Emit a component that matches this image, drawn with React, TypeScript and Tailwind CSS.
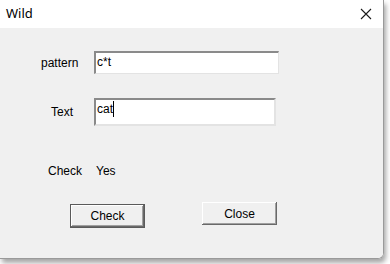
import { useState } from "react";

export default function App() {
  const [pattern, setPattern] = useState("c*t");
  const [text, setText] = useState("cat");

  return (
    <div className="w-[390px] h-[264px] bg-white font-['Liberation_Sans',Arial,sans-serif] text-[12px] text-black">
      <div className="w-[384px] h-[259px] flex flex-col rounded-br-[6px] overflow-hidden border-r border-b border-[#9a9a9a] shadow-[2px_4px_5px_rgba(0,0,0,0.35)]">
        {/* title bar */}
        <div className="h-[28px] bg-white flex items-center justify-between pl-[6px] pr-[10px]">
          <span className="text-[13px] font-['Noto_Sans',sans-serif]">Wild</span>
          <svg width="12" height="12" viewBox="0 0 12 12" className="mr-[1px]">
            <path d="M1 1 L11 11 M11 1 L1 11" stroke="#1a1a1a" strokeWidth="1.1" />
          </svg>
        </div>

        {/* body */}
        <div className="flex-1 bg-[#f0f0f0] flex flex-col">
          <div className="flex items-center mt-[23px]">
            <span className="ml-[41px] w-[53px]">pattern</span>
            <div className="w-[185px] h-[23px] bg-white border-t-2 border-l-2 border-[#8a8a8a] border-r border-b border-r-[#e3e3e3] border-b-[#e3e3e3] pl-[1px] leading-[18px]">
              {pattern}
            </div>
          </div>

          <div className="flex items-center mt-[24px]">
            <span className="ml-[51px] w-[43px]">Text</span>
            <div className="w-[182px] h-[28px] bg-white border-t-2 border-l-2 border-[#8a8a8a] border-r-2 border-b-2 border-r-[#e3e3e3] border-b-[#e3e3e3] pl-[1px] pt-[1px] leading-[16px] flex items-start">
              <span>{text}</span>
              <span className="w-px h-[16px] bg-black" />
            </div>
          </div>

          <div className="flex items-center mt-[36px]">
            <span className="ml-[48px] w-[48px]">Check</span>
            <span>Yes</span>
          </div>

          <div className="flex items-start mt-[22px]">
            <button
              onClick={() => setText(text)}
              className="ml-[70px] mt-[2px] w-[75px] h-[24px] bg-[#f0f0f0] border border-[#5a5a5a] shadow-[inset_-1px_-1px_0_#696969,inset_1px_1px_0_#ffffff,inset_-2px_-2px_0_#a0a0a0] text-[12px]"
            >
              Check
            </button>
            <button
              onClick={() => setPattern(pattern)}
              className="ml-[57px] w-[75px] h-[23px] bg-[#f0f0f0] shadow-[inset_-1px_-1px_0_#696969,inset_1px_1px_0_#ffffff,inset_-2px_-2px_0_#a0a0a0] text-[12px]"
            >
              Close
            </button>
          </div>
        </div>
      </div>
    </div>
  );
}
